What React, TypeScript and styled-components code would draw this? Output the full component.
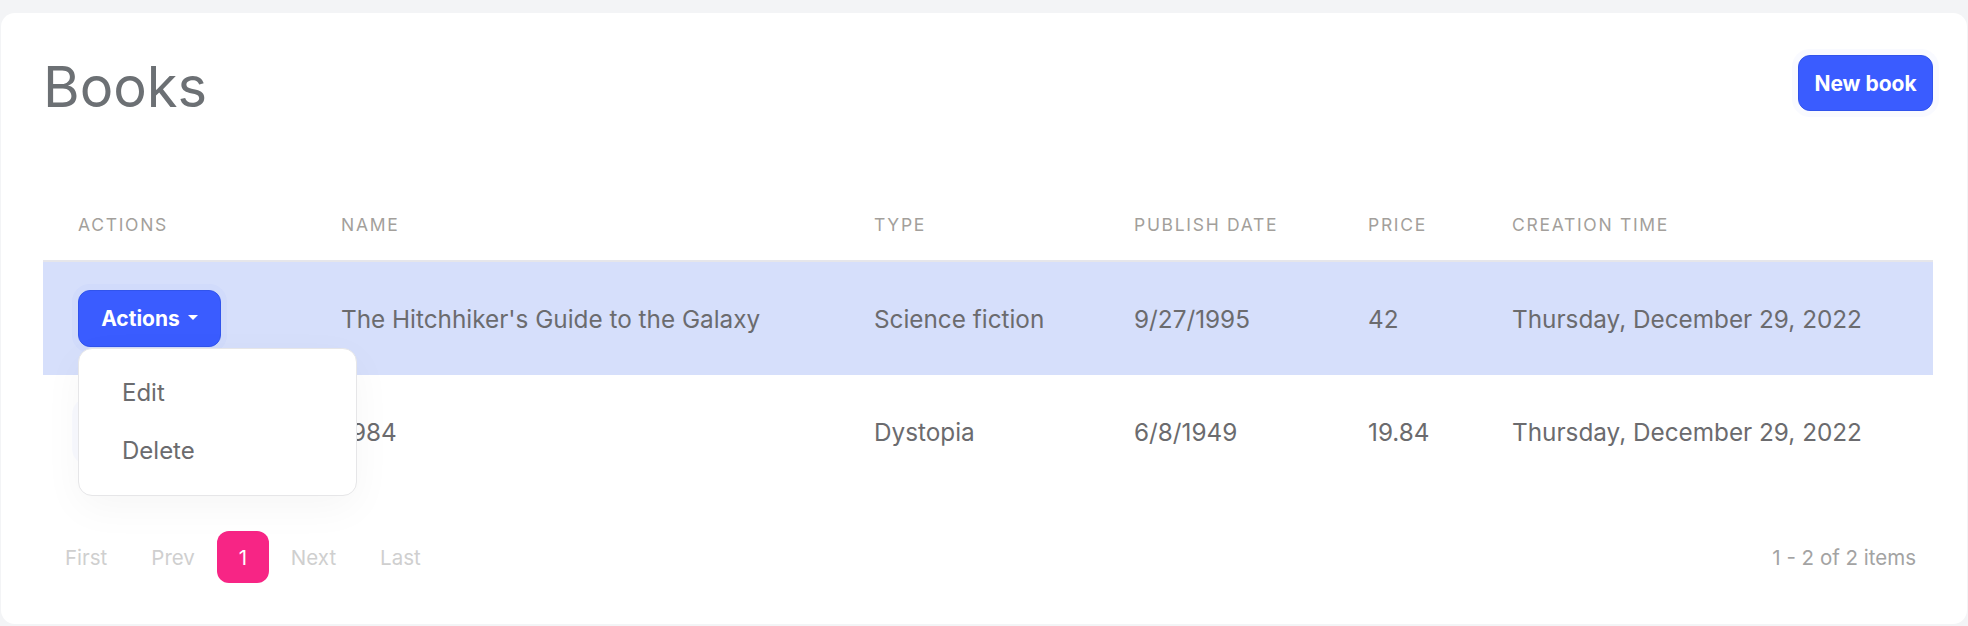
import React from "react";
import styled, { createGlobalStyle } from "styled-components";

const GlobalStyle = createGlobalStyle`
  html, body {
    margin: 0;
    padding: 0;
    background: #f3f4f6;
    font-family: Inter, "Noto Sans", "Liberation Sans", sans-serif;
  }
  * { box-sizing: border-box; }
`;

const Page = styled.div`
  padding: 13px 1px 2px 1px;
`;

const Card = styled.div`
  background: #ffffff;
  border-radius: 14px;
  padding: 41px 34px 41px 42px;
`;

const TopBar = styled.div`
  display: flex;
  justify-content: space-between;
  align-items: flex-start;
  height: 67px;
`;

const Title = styled.h1`
  margin: 0;
  font-size: 56px;
  line-height: 67px;
  font-weight: 400;
  color: #6c7074;
`;

const PrimaryButton = styled.button<{ $w: number; $h: number }>`
  display: inline-flex;
  align-items: center;
  justify-content: center;
  gap: 8px;
  width: ${(p) => p.$w}px;
  height: ${(p) => p.$h}px;
  padding: 0;
  border: 1px solid #3154ec;
  border-radius: 12px;
  background: #3a5cff;
  color: #ffffff;
  font-family: inherit;
  font-size: 21px;
  font-weight: 700;
  box-shadow: 0 0 0 6px rgba(58, 92, 255, 0.03);
  cursor: pointer;
`;

const NewButton = styled(PrimaryButton)`
  margin-top: 1px;
`;

const Caret = styled.span`
  width: 0;
  height: 0;
  border-left: 5px solid transparent;
  border-right: 5px solid transparent;
  border-top: 5px solid #ffffff;
  margin-top: -2px;
`;

const Table = styled.div`
  margin-top: 69px;
`;

const COLS = "263px 533px 260px 234px 144px 1fr";

const HeaderRow = styled.div`
  display: grid;
  grid-template-columns: ${COLS};
  border-bottom: 2px solid #e6e6ea;
`;

const HeaderCell = styled.div`
  padding: 24px 0 24px 35px;
  font-size: 17.5px;
  line-height: 22px;
  letter-spacing: 1.7px;
  text-transform: uppercase;
  color: #a39f9b;
  white-space: nowrap;
`;

const Row = styled.div<{ $active?: boolean }>`
  display: grid;
  grid-template-columns: ${COLS};
  align-items: center;
  height: 113px;
  background: ${(p) => (p.$active ? "#d6dffb" : "transparent")};
`;

const Cell = styled.div`
  padding-left: 35px;
  font-size: 24.3px;
  line-height: 30px;
  color: #6b6b6e;
  white-space: nowrap;
`;

const ActionWrap = styled.div`
  position: relative;
  display: inline-block;
`;

const Menu = styled.div`
  position: absolute;
  top: calc(100% + 1px);
  left: 0;
  z-index: 10;
  width: 279px;
  padding: 15px 0;
  background: #ffffff;
  border: 1px solid #e6e6e8;
  border-radius: 14px;
  box-shadow: 0 12px 40px rgba(0, 0, 0, 0.04);
`;

const MenuItem = styled.div`
  height: 58px;
  display: flex;
  align-items: center;
  padding-left: 43px;
  font-size: 24px;
  color: #6b6b6e;
`;

const Footer = styled.div`
  display: flex;
  justify-content: space-between;
  align-items: center;
  margin-top: 43px;
  height: 52px;
`;

const Pager = styled.div`
  display: flex;
  align-items: center;
`;

const PageItem = styled.span<{ $active?: boolean }>`
  display: inline-flex;
  align-items: center;
  justify-content: center;
  height: 52px;
  font-size: 20.5px;
  padding-top: 1px;
  ${(p) =>
    p.$active
      ? `width: 52px; background: #f72585; color: #ffffff; border-radius: 12px;`
      : `padding-left: 22px; padding-right: 22px; color: #cfcfcf;`}
`;

const Count = styled.span`
  font-size: 20.5px;
  color: #a3a3a3;
  padding-right: 17px;
  padding-top: 1px;
`;

const headers = ["Actions", "Name", "Type", "Publish date", "Price", "Creation time"];

const books = [
  {
    name: "The Hitchhiker's Guide to the Galaxy",
    type: "Science fiction",
    date: "9/27/1995",
    price: "42",
    created: "Thursday, December 29, 2022",
  },
  {
    name: "1984",
    type: "Dystopia",
    date: "6/8/1949",
    price: "19.84",
    created: "Thursday, December 29, 2022",
  },
];

export default function App() {
  return (
    <>
      <GlobalStyle />
      <Page>
        <Card>
          <TopBar>
            <Title>Books</Title>
            <NewButton $w={135} $h={56}>New book</NewButton>
          </TopBar>
          <Table>
            <HeaderRow>
              {headers.map((h) => (
                <HeaderCell key={h}>{h}</HeaderCell>
              ))}
            </HeaderRow>
            {books.map((b, i) => (
              <Row key={b.name} $active={i === 0}>
                <Cell>
                  <ActionWrap>
                    <PrimaryButton $w={143} $h={57}>
                      Actions <Caret />
                    </PrimaryButton>
                    {i === 0 && (
                      <Menu>
                        <MenuItem>Edit</MenuItem>
                        <MenuItem>Delete</MenuItem>
                      </Menu>
                    )}
                  </ActionWrap>
                </Cell>
                <Cell>{b.name}</Cell>
                <Cell>{b.type}</Cell>
                <Cell>{b.date}</Cell>
                <Cell>{b.price}</Cell>
                <Cell>{b.created}</Cell>
              </Row>
            ))}
          </Table>
          <Footer>
            <Pager>
              <PageItem>First</PageItem>
              <PageItem>Prev</PageItem>
              <PageItem $active>1</PageItem>
              <PageItem>Next</PageItem>
              <PageItem>Last</PageItem>
            </Pager>
            <Count>1 - 2 of 2 items</Count>
          </Footer>
        </Card>
      </Page>
    </>
  );
}
